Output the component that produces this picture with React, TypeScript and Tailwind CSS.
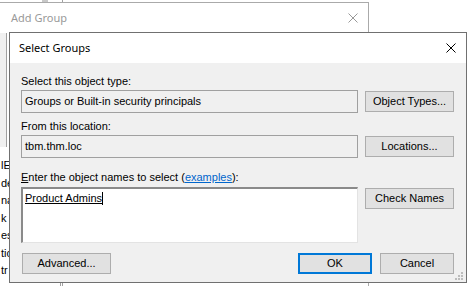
const CloseX = ({ color }: { color: string }) => (
  <svg width="10" height="10" viewBox="0 0 10 10">
    <path d="M0.5 0.5 L9.5 9.5 M9.5 0.5 L0.5 9.5" stroke={color} strokeWidth="1" fill="none" />
  </svg>
);

const Grip = () => (
  <svg width="8" height="8" viewBox="0 0 8 8">
    {[
      [6, 0],
      [3, 3],
      [6, 3],
      [0, 6],
      [3, 6],
      [6, 6],
    ].map(([x, y]) => (
      <rect key={`${x}-${y}`} x={x} y={y} width="2" height="2" fill="#bcbcbc" />
    ))}
  </svg>
);

const Btn = ({ label, className = "" }: { label: string; className?: string }) => (
  <div
    className={`flex items-center justify-center h-[21px] bg-[#e1e1e1] border border-[#adadad] text-[11px] text-black ${className}`}
  >
    {label}
  </div>
);

export default function App() {
  const behindList = ["lE", "de", "na", "k", "es", "tic", "tr"];

  return (
    <div className="relative w-[474px] h-[286px] overflow-hidden bg-white font-['Liberation_Sans',sans-serif]">
      {/* bits of windows further behind */}
      <div className="absolute left-[42px] top-0 w-[6px] h-[2px] bg-[#c8c8c8]" />
      <div className="absolute left-[62px] top-0 w-px h-[2px] bg-[#a0a0a0]" />

      {/* Add Group window (inactive, behind) */}
      <div className="absolute left-[-1px] top-[2px] w-[370px] h-[300px] border border-[#aaaaaa] bg-white flex flex-col">
        <div className="h-[30px] flex items-center justify-between pl-[11px] pr-[10px] font-['Noto_Sans',sans-serif] text-[11px] text-[#999999]">
          <span>Add Group</span>
          <CloseX color="#999999" />
        </div>
        <div className="flex flex-col">
          <div className="w-[7px] h-[114px] bg-[#f0f0f0] border-r border-[#a0a0a0]" />
          <div className="flex flex-col pt-[10px] pl-px text-[11px] text-black leading-[17.5px]">
            {behindList.map((t) => (
              <span key={t}>{t}</span>
            ))}
          </div>
        </div>
      </div>
      <div className="absolute left-[60px] top-[283px] w-px h-[3px] bg-[#a0a0a0]" />
      <div className="absolute left-[62px] top-[283px] w-px h-[3px] bg-[#a0a0a0]" />

      {/* Select Groups dialog */}
      <div className="absolute left-[9px] top-[32px] w-[458px] h-[251px] border border-[#707070] bg-[#f0f0f0] flex flex-col">
        <div className="h-[30px] bg-white flex items-center justify-between pl-[9px] pr-[10px]">
          <span className="font-['Noto_Sans',sans-serif] text-[11px] text-black">Select Groups</span>
          <CloseX color="#000000" />
        </div>

        <div className="relative flex-1 flex flex-col pl-[11px] pr-[12px] text-[11px] text-black leading-[13px]">
          <div className="mt-[12px]">Select this object type:</div>
          <div className="mt-[2px] flex items-start">
            <div className="w-[337px] h-[23px] flex items-center pl-[3px] border border-[#a0a0a0] bg-[#f0f0f0]">
              Groups or Built-in security principals
            </div>
            <Btn label="Object Types..." className="ml-[7px] mt-[1px] w-[89px]" />
          </div>

          <div className="mt-[7px]">From this location:</div>
          <div className="mt-[2px] flex items-start">
            <div className="w-[337px] h-[23px] flex items-center pl-[3px] border border-[#a0a0a0] bg-[#f0f0f0]">
              tbm.thm.loc
            </div>
            <Btn label="Locations..." className="ml-[7px] mt-[1px] w-[89px]" />
          </div>

          <div className="mt-[13px]">
            <span className="underline">E</span>nter the object names to select (
            <span className="text-[#0066cc] underline">examples</span>):
          </div>
          <div className="mt-[3px] flex items-start">
            <div className="w-[337px] h-[56px] bg-white border-t-2 border-l-2 border-t-[#8a8a8a] border-l-[#8a8a8a] border-b border-r border-b-[#e3e3e3] border-r-[#e3e3e3] pl-[2px] pt-[3px]">
              <span className="underline">Product Admins</span>
              <span className="inline-block w-px h-[13px] bg-black align-top" />
            </div>
            <Btn label="Check Names" className="ml-[7px] mt-px w-[89px]" />
          </div>

          <div className="mt-[10px] flex items-start">
            <Btn label="Advanced..." className="ml-px w-[89px]" />
            <div className="flex-1" />
            <div className="flex items-center justify-center w-[74px] h-[21px] bg-[#e1e1e1] border-2 border-[#0078d7] text-[11px]">
              OK
            </div>
            <Btn label="Cancel" className="ml-[8px] w-[74px]" />
          </div>

          <div className="absolute right-[3px] bottom-[2px]">
            <Grip />
          </div>
        </div>
      </div>
    </div>
  );
}
